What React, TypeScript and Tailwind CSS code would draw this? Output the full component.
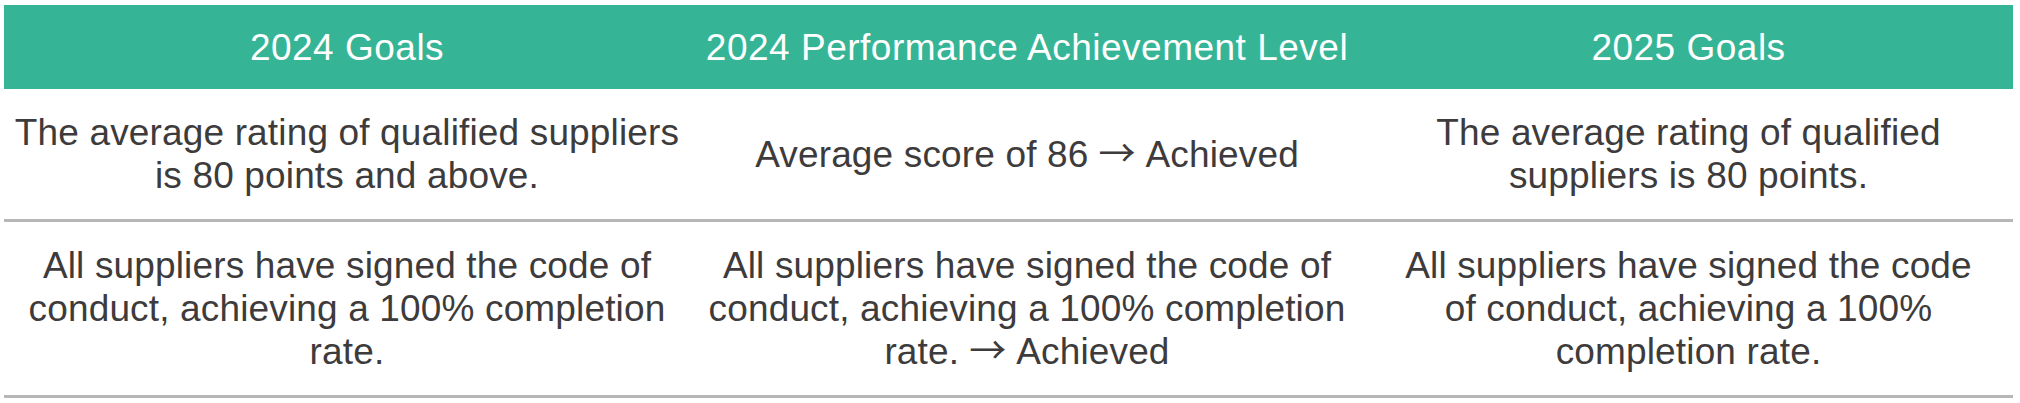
function Arrow() {
  return (
    <span
      style={{ fontFamily: '"Noto Sans CJK SC", "DejaVu Sans", sans-serif' }}
      className="inline-block leading-[30px] tracking-normal align-baseline mx-[10px]"
    >
      →
    </span>
  );
}

export default function App() {
  const font = { fontFamily: '"Liberation Sans", Arial, sans-serif' };
  const rows: React.ReactNode[][] = [
    [
      "The average rating of qualified suppliers is 80 points and above.",
      <>
        Average score of 86<Arrow />Achieved
      </>,
      "The average rating of qualified suppliers is 80 points.",
    ],
    [
      "All suppliers have signed the code of conduct, achieving a 100% completion rate.",
      <>
        All suppliers have signed the code of conduct, achieving a 100% completion rate.<Arrow />Achieved
      </>,
      "All suppliers have signed the code of conduct, achieving a 100% completion rate.",
    ],
  ];
  const headers = ["2024 Goals", "2024 Performance Achievement Level", "2025 Goals"];
  const pad = ["px-[4px]", "px-[8px]", "px-[24px]"];
  return (
    <div className="w-[2020px] h-[403px] bg-white pt-[5px] pl-[4px]" style={font}>
      <table className="w-[2009px] border-collapse table-fixed">
        <colgroup>
          <col className="w-[686px]" />
          <col className="w-[674px]" />
          <col className="w-[649px]" />
        </colgroup>
        <thead>
          <tr className="bg-[#35b596] h-[84px]">
            {headers.map((h) => (
              <th
                key={h}
                className="text-white font-normal text-[37px] leading-[43px] tracking-[0.5px] text-center align-middle px-2"
              >
                {h}
              </th>
            ))}
          </tr>
        </thead>
        <tbody>
          {rows.map((r, i) => (
            <tr key={i} className="border-b-[3px] border-[#b7b7b7]">
              {r.map((c, j) => (
                <td
                  key={j}
                  className={`text-[#3d3b3b] text-[37px] leading-[43px] tracking-[0.15px] text-center align-middle py-[22px] ${pad[j]}`}
                >
                  {c}
                </td>
              ))}
            </tr>
          ))}
        </tbody>
      </table>
    </div>
  );
}
